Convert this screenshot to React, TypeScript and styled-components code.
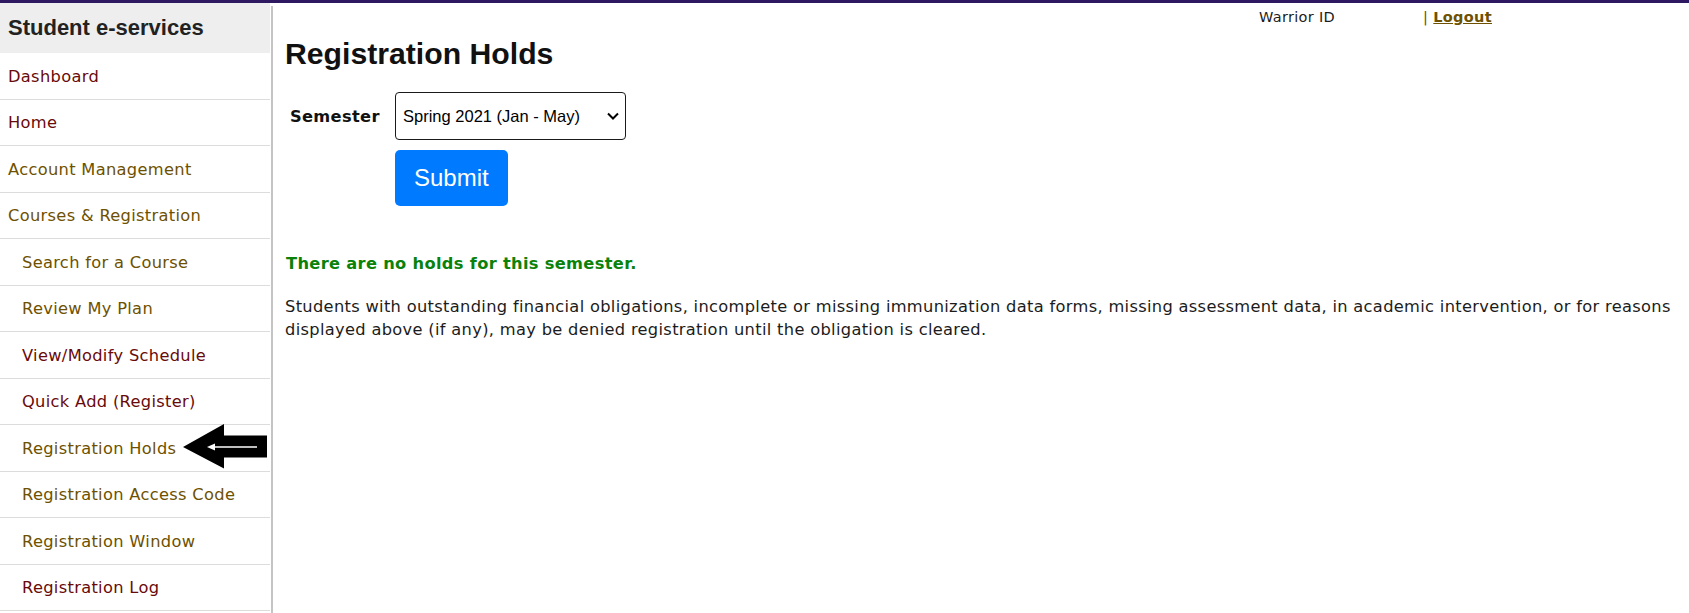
import styled, { createGlobalStyle } from "styled-components"

const GlobalStyle = createGlobalStyle`
   html, body {
      margin: 0;
      padding: 0;
      background: #fff;
   }
   body {
      font-family: "DejaVu Sans", Verdana, sans-serif;
      letter-spacing: 0.32px;
      color: #1c1c1c;
   }
`

const TopBar = styled.div`
   height: 3px;
   background: #2e1862;
`

const Page = styled.div`
   display: flex;
   align-items: flex-start;
`

const Sidebar = styled.nav`
   width: 270px;
   flex-shrink: 0;
`

const SidebarHeader = styled.div`
   height: 50px;
   display: flex;
   align-items: center;
   padding-left: 8px;
   background: #eeeeee;
   font-family: "Liberation Sans", Arial, sans-serif;
   letter-spacing: 0;
   font-weight: bold;
   font-size: 22px;
   color: #222;
`

const NavItem = styled.a<{ $sub?: boolean; $visited?: boolean }>`
   position: relative;
   box-sizing: border-box;
   height: 46.5px;
   display: flex;
   align-items: center;
   padding: 1px 0 0 ${p => (p.$sub ? "22px" : "8px")};
   border-bottom: 1px solid #dcdcdc;
   font-size: 16.25px;
   text-decoration: none;
   color: ${p => (p.$visited ? "#690a0a" : "#6e5100")};
   cursor: pointer;
`

const Pointer = styled.svg`
   position: absolute;
   left: 183px;
   top: -1px;
`

const Main = styled.main`
   flex: 1;
   margin: 3px 0 0 1px;
   min-height: 607px;
   border-left: 2px solid #c4c4c4;
   padding: 0 12px 0 12px;
`

const TopLinks = styled.div`
   height: 22px;
   display: flex;
   justify-content: flex-end;
   align-items: center;
   padding-right: 185px;
   font-size: 14.5px;
`

const UserLabel = styled.span`
   color: #1c1c1c;
   margin-right: 88px;
`

const Separator = styled.span`
   color: #6e5100;
`

const LogoutLink = styled.a`
   color: #6e5100;
   font-weight: bold;
   text-decoration: underline;
   margin-left: 5px;
`

const Title = styled.h1`
   margin: 9px 0 0;
   font-family: "Liberation Sans", Arial, sans-serif;
   letter-spacing: 0;
   font-size: 30.2px;
   line-height: 34px;
   font-weight: bold;
   color: #111;
`

const FormRow = styled.div`
   display: flex;
   align-items: center;
   margin-top: 21px;
`

const FieldLabel = styled.label`
   width: 110px;
   box-sizing: border-box;
   padding-left: 5px;
   font-weight: bold;
   font-size: 16.25px;
   color: #111;
`

const SelectWrap = styled.div`
   position: relative;
   width: 231px;
`

const Select = styled.select`
   appearance: none;
   -webkit-appearance: none;
   box-sizing: border-box;
   width: 100%;
   height: 48px;
   padding: 0 30px 0 7px;
   border: 1px solid #1a1a1a;
   border-radius: 4px;
   background: #fff;
   font-family: "Liberation Sans", Arial, sans-serif;
   letter-spacing: 0;
   font-size: 16.5px;
   color: #000;
   outline: none;
`

const Chevron = styled.svg`
   position: absolute;
   right: 7px;
   top: 20px;
   pointer-events: none;
`

const SubmitButton = styled.button`
   margin: 10px 0 0 110px;
   height: 56px;
   padding: 0 19px;
   border: none;
   border-radius: 5px;
   background: #007bff;
   color: #fff;
   font-family: "Liberation Sans", Arial, sans-serif;
   letter-spacing: 0;
   font-size: 24px;
   cursor: pointer;
`

const Notice = styled.p`
   margin: 48px 0 0 1px;
   font-weight: bold;
   font-size: 16.25px;
   line-height: 20px;
   color: #0a820a;
`

const Info = styled.p`
   margin: 22px 0 0;
   font-size: 16.25px;
   line-height: 22.5px;
   color: #1c1c1c;
`

const navItems = [
   { label: "Dashboard", visited: true },
   { label: "Home", visited: true },
   { label: "Account Management" },
   { label: "Courses & Registration" },
   { label: "Search for a Course", sub: true },
   { label: "Review My Plan", sub: true },
   { label: "View/Modify Schedule", sub: true, visited: true },
   { label: "Quick Add (Register)", sub: true, visited: true },
   { label: "Registration Holds", sub: true, pointed: true },
   { label: "Registration Access Code", sub: true },
   { label: "Registration Window", sub: true },
   { label: "Registration Log", sub: true, visited: true },
]

function ArrowMark() {
   return <Pointer width="84" height="45" viewBox="0 0 84 45">
      <polygon points="0,23 41,0 41,11.5 84,11.5 84,33.5 41,33.5 41,44.5" fill="#000" />
      <line x1="30" y1="23" x2="74" y2="23" stroke="#fff" strokeWidth="1.4" />
      <polygon points="24,23 32,19.5 32,26.5" fill="#fff" />
   </Pointer>
}

export default function App() {
   return <>
      <GlobalStyle />
      <TopBar />
      <Page>
         <Sidebar>
            <SidebarHeader>Student e-services</SidebarHeader>
            {navItems.map(item =>
               <NavItem key={item.label} $sub={item.sub} $visited={item.visited}>
                  {item.label}
                  {item.pointed && <ArrowMark />}
               </NavItem>
            )}
         </Sidebar>
         <Main>
            <TopLinks>
               <UserLabel>Warrior ID</UserLabel>
               <Separator>|</Separator>
               <LogoutLink>Logout</LogoutLink>
            </TopLinks>
            <Title>Registration Holds</Title>
            <FormRow>
               <FieldLabel>Semester</FieldLabel>
               <SelectWrap>
                  <Select defaultValue="spring2021">
                     <option value="spring2021">Spring 2021 (Jan - May)</option>
                     <option value="fall2020">Fall 2020 (Sep - Dec)</option>
                  </Select>
                  <Chevron width="12" height="8" viewBox="0 0 12 8">
                     <polyline points="1,1.5 6,6.5 11,1.5" fill="none" stroke="#000" strokeWidth="2" />
                  </Chevron>
               </SelectWrap>
            </FormRow>
            <SubmitButton>Submit</SubmitButton>
            <Notice>There are no holds for this semester.</Notice>
            <Info>
               Students with outstanding financial obligations, incomplete or missing immunization data forms, missing assessment data, in academic intervention, or for reasons displayed above (if any), may be denied registration until the obligation is cleared.
            </Info>
         </Main>
      </Page>
   </>
}
